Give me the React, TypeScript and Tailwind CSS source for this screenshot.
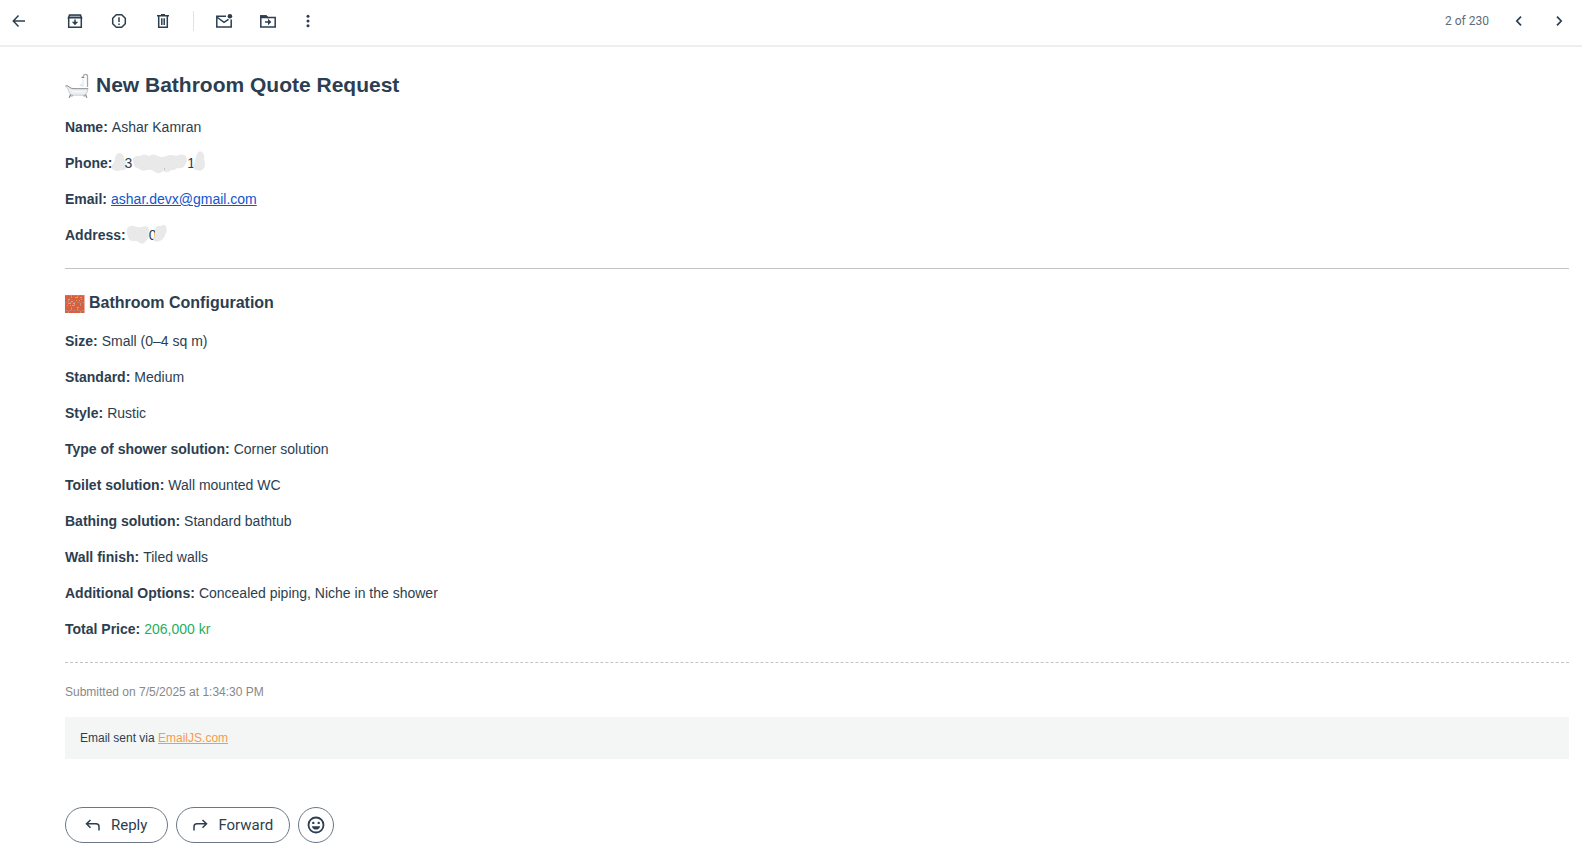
import React from 'react';

const Icon: React.FC<{ children: React.ReactNode }> = ({ children }) => (
  <svg viewBox="0 0 20 20" className="size-5 shrink-0" fill="none" stroke="currentColor" strokeWidth={1.5} aria-hidden="true">
    {children}
  </svg>
);

const ToolButton: React.FC<{ label: string; children: React.ReactNode }> = ({ label, children }) => (
  <button type="button" aria-label={label} className="flex size-5 items-center justify-center rounded-full">
    <Icon>{children}</Icon>
  </button>
);

const Bathtub = () => (
  <svg viewBox="0 0 24 26" className="h-[26px] w-6 shrink-0" fill="none" aria-hidden="true">
    <path d="M22.5 15V4.2Q22.5 2.3 20.5 2.3Q18.6 2.3 18.6 4.4" stroke="#a3a9ac" strokeWidth="1.3" />
    <path d="M16.3 5.3Q17.6 3.8 19.6 5.3L18.8 6H16.8Z" fill="#7d8589" />
    <path d="M17.4 7V13M18.8 7.5V13" stroke="#dfe6ea" strokeWidth=".7" />
    <path d="M14.5 14Q15 11 17.5 11.5Q19 12.500 19 15Z" fill="#e5eaed" />
    <path d="M.8 13.6Q2.7 13.2 4.6 15.3Q6 16.5 9 16.5H23L22.2 20Q21.4 23.2 18.6 23.2H7.8Q4.6 23.2 3.8 19.4Q3.2 15.4.8 14.8Z" fill="#eceeef" stroke="#b9bfc2" strokeWidth=".7" />
    <path d="M.8 13.8Q2.7 13.2 4.7 15.4Q6 16.7 9 16.7H23.2" stroke="#8e979c" strokeWidth="1" />
    <path d="M5.6 22.4L4.2 25.8M7.3 23.2L6.6 24.6M20.5 22.4L21.9 25.8M18.8 23.2L19.4 24.6" stroke="#7f888c" strokeWidth="1.2" />
    <path d="M7 19.5H20" stroke="#f7f8f8" />
  </svg>
);

const Bricks = () => (
  <svg viewBox="0 0 20 20" className="size-5 shrink-0" aria-hidden="true">
    <rect y="2" width="19.5" height="18" fill="#d9603f" />
    <path d="M0 2.5H19.5M0 9.5H19.5M0 17.5H19.5" stroke="#a58f88" strokeWidth=".8" strokeDasharray="3 1" />
    <path d="M6.5 2V5M12.5 2V5M3.5 6V9M9.5 10V13M15.5 10V13M6.500 14V17M12.5 14V17M3.5 18V20M15.5 18V20" stroke="#b5a596" strokeWidth=".8" />
    <path d="M3 6.5H5M10 4.5H13M15 4.5H17M11 7.5H12M14 7.5H15M16 6.5H17M3 10.5H6M8 10.5H10M5 12.5H6M7 12.5H9M2 12.5H3M6 8.5H8M13 14.5H14" stroke="#f0a04b" />
  </svg>
);

const PhoneNumber = () => (
  <span className="flex items-center">
    <svg viewBox="0 0 12 22" className="h-[22px] w-3 overflow-visible" fill="#e9e9e9" aria-hidden="true">
      <path d="M0 13Q3 10 3 6Q4 1 8 1Q12 2 12 7Q15 11 15 15Q13 19 9 18Q5 20 2 18Q-2 17 0 13Z" />
    </svg>
    3
    <svg viewBox="0 0 55 22" className="h-[22px] w-[55px] overflow-visible" fill="#e9e9e9" aria-hidden="true">
      <path d="M1 7Q3 3 8 4Q12 1 17 4Q21 1 26 4Q30 6 34 4Q39 2 44 4Q50 1 54 4Q56 9 53 13Q51 17 45 16Q43 19 39 18Q36 22 31 19Q27 23 23 20Q19 17 15 18Q9 20 6 16Q1 16 1 7Z" />
      <path d="M32 17h1" stroke="#9aa0a6" />
    </svg>
    1
    <svg viewBox="0 0 11 22" className="h-[22px] w-[11px] overflow-visible" fill="#e9e9e9" aria-hidden="true">
      <path d="M2 2Q4-2 7 0Q10 2 9 7Q11 12 9 16Q7 20 2 18Q-2 18-2 14Q-1 12 0 9Z" />
    </svg>
  </span>
);

const StreetAddress = () => (
  <span className="flex items-center">
    <svg viewBox="0 0 23 22" className="h-[22px] w-[23px] overflow-visible" fill="#e9e9e9" aria-hidden="true">
      <path d="M1 5Q3 1 8 2Q12 4 16 3Q20 1 23 4Q22 8 23 12Q22 15 20 17Q18 21 14 19Q10 16 7 17Q2 17 2 12Q0 9 1 5Z" />
    </svg>
    0
    <svg viewBox="0 0 11 22" className="h-[22px] w-[11px] overflow-visible" fill="#e9e9e9" aria-hidden="true">
      <path d="M-2 6Q-1 1 4 2Q8-1 9 3Q11 7 8 11Q7 15 3 17Q-2 19-4 16Q-2 12-2 10Z" />
    </svg>
  </span>
);

const Row: React.FC<{ label: string; tight?: boolean; children: React.ReactNode }> = ({ label, tight, children }) => (
  <p className={tight ? 'flex' : 'flex gap-1'}>
    <strong>{label}:</strong>
    {children}
  </p>
);

const configuration = [
  { label: 'Size', value: 'Small (0–4 sq m)' },
  { label: 'Standard', value: 'Medium' },
  { label: 'Style', value: 'Rustic' },
  { label: 'Type of shower solution', value: 'Corner solution' },
  { label: 'Toilet solution', value: 'Wall mounted WC' },
  { label: 'Bathing solution', value: 'Standard bathtub' },
  { label: 'Wall finish', value: 'Tiled walls' },
  { label: 'Additional Options', value: 'Concealed piping, Niche in the shower' },
];

const Toolbar = () => (
  <header className="mr-1 flex h-[47px] items-center justify-between border-b-2 border-[#eeeeee] pb-[3px] pl-[9px] pr-[13px] text-[#2c3e50]">
    <div className="flex items-center gap-5">
      <div className="flex items-center gap-6">
        <div className="mr-3">
          <ToolButton label="Back">
            <path d="M16 10H4.800M9.500 4.500L4.300 10L9.500 15.500" />
          </ToolButton>
        </div>
        <ToolButton label="Archive">
          <path d="M4.500 4H15.500L16.500 6.800H3.500Z" fill="#9aa5b1" />
          <path d="M3.700 6.500V16.300H16.300V6.500" />
          <path d="M10 8.500V12.500" />
          <path d="M6.800 10.800H13.200L10 14.200Z" fill="currentColor" stroke="none" />
        </ToolButton>
        <ToolButton label="Report spam">
          <path d="M7.300 3.700H12.700L16.300 7.300V12.700L12.700 16.300H7.300L3.700 12.700V7.300Z" />
          <path d="M10 6.200V11M10 12.400V14" />
        </ToolButton>
        <ToolButton label="Delete">
          <path d="M4 4.800H16M8 3.800H12M5.700 5V16.200H14.300V5" />
          <path d="M8.800 7.300V13.900M11.200 7.300V13.900" />
        </ToolButton>
      </div>
      <div className="h-5 w-px bg-[#e0e3e5]" />
      <div className="flex items-center gap-6">
        <ToolButton label="Mark as unread">
          <path d="M12 5.200H2.800V15.900H17.200V8.500M3.500 6.500L10 11.300L14.500 8.300" />
          <circle cx="15.900" cy="5.200" r="2.300" fill="currentColor" stroke="none" />
        </ToolButton>
        <ToolButton label="Move to">
          <path d="M2.800 15.900V5H8L9.600 6.600H17.200V15.900Z" />
          <path d="M2.800 5H8L9.600 6.600H2.800Z" fill="currentColor" />
          <path d="M7 11H11" />
          <path d="M10 7.800L13.300 11L10 14.200Z" fill="currentColor" stroke="none" />
        </ToolButton>
      </div>
      <ToolButton label="More">
        <g fill="currentColor" stroke="none">
          <circle cx="10" cy="5.200" r="1.500" />
          <circle cx="10" cy="10" r="1.500" />
          <circle cx="10" cy="14.800" r="1.500" />
        </g>
      </ToolButton>
    </div>
    <div className="flex items-center gap-5">
      <span className="font-['Roboto',sans-serif] text-xs text-[#5f6b76]">2 of 230</span>
      <ToolButton label="Newer">
        <path d="M12 5.600L7.800 10L12 14.400" strokeWidth={1.7} />
      </ToolButton>
      <ToolButton label="Older">
        <path d="M8 5.600L12.200 10L8 14.400" strokeWidth={1.7} />
      </ToolButton>
    </div>
  </header>
);

const pill = "flex h-9 items-center justify-center rounded-full border border-[#6b7785] font-['Roboto',sans-serif] text-[15px] text-[#2c3e50]";

export default function App() {
  return (
    <div className="min-h-screen bg-white font-['Liberation_Sans',Arial,sans-serif] text-sm leading-[22px] text-[#2c3e50]">
      <Toolbar />
      <main className="pb-3 pl-[65px] pr-[17px] pt-[22px]">
        <h1 className="flex h-8 items-center gap-[7px] text-[21px] font-bold">
          <Bathtub />
          New Bathroom Quote Request
        </h1>
        <section className="mt-[15px] flex flex-col gap-[14px]">
          <Row label="Name">Ashar Kamran</Row>
          <Row label="Phone" tight>
            <PhoneNumber />
          </Row>
          <Row label="Email">
            <a href="mailto:ashar.devx@gmail.com" className="text-[#1155cc] underline">ashar.devx@gmail.com</a>
          </Row>
          <Row label="Address" tight>
            <StreetAddress />
          </Row>
        </section>
        <hr className="mt-[22px] border-[#c4c4c4]" />
        <h2 className="mt-5 flex h-7 items-center gap-1 text-base font-bold">
          <Bricks />
          Bathroom Configuration
        </h2>
        <section className="mt-[13px] flex flex-col gap-[14px]">
          {configuration.map((item) => (
            <Row key={item.label} label={item.label}>{item.value}</Row>
          ))}
          <Row label="Total Price">
            <span className="text-[#27ae60]">206,000 kr</span>
          </Row>
        </section>
        <hr className="mt-[22px] border-dashed border-[#c4c4c4]" />
        <p className="mt-5 text-xs leading-[18px] text-[#888888]">Submitted on 7/5/2025 at 1:34:30 PM</p>
        <footer className="mt-4 bg-[#f4f6f6] px-[15px] py-3 text-xs leading-[18px]">
          Email sent via <a href="https://www.emailjs.com" className="text-[#f79a4d] underline">EmailJS.com</a>
        </footer>
        <div className="mt-12 flex gap-2">
          <button type="button" className={`${pill} gap-2 pl-[17px] pr-5`}>
            <Icon>
              <path d="M7.500 5L3.500 8.800L7.500 12.700M3.800 8.800H13Q16 8.800 16 11.800V15.500" />
            </Icon>
            Reply
          </button>
          <button type="button" className={`${pill} gap-2 pl-[13px] pr-4`}>
            <Icon>
              <path d="M12.500 5L16.500 8.800L12.500 12.700M16.200 8.800H7Q4 8.800 4 11.800V15.500" />
            </Icon>
            Forward
          </button>
          <button type="button" aria-label="Add reaction" className={`${pill} w-9`}>
            <Icon>
              <circle cx="10" cy="10" r="7.500" strokeWidth="1.800" />
              <path d="M5.800 11.200H14.200Q13.200 14.600 10 14.600Q6.800 14.600 5.800 11.200Z" fill="currentColor" stroke="none" />
              <circle cx="7.300" cy="7.900" r="1.200" fill="currentColor" stroke="none" />
              <circle cx="12.700" cy="7.900" r="1.200" fill="currentColor" stroke="none" />
            </Icon>
          </button>
        </div>
      </main>
    </div>
  );
}
